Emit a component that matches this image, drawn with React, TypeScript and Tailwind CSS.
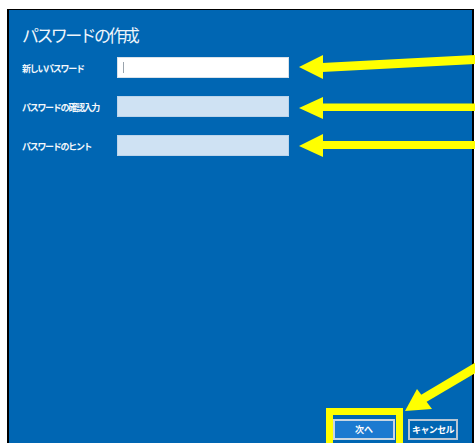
import React from 'react';

const jp = { fontFamily: '"Noto Sans CJK JP", "Noto Sans", sans-serif' };

type FieldProps = { label: string; active?: boolean };

function Field({ label, active }: FieldProps) {
  return (
    <div className="flex items-center h-[21px]">
      <div className="w-[95px] text-[9px] font-semibold text-[#f4f8fc] tracking-[-1.3px] leading-none pt-[2px]">{label}</div>
      <div
        className={`relative w-[172px] h-[21px] border ${
          active ? 'bg-white border-[#d9e2ea]' : 'bg-[#cfe2f3] border-[#bcd4ea]'
        }`}
      >
        {active && <div className="absolute left-[5px] top-[4px] w-px h-[11px] bg-[#9aa4ad]" />}
      </div>
    </div>
  );
}

export default function App() {
  return (
    <div className="relative w-[475px] h-[443px] bg-white overflow-hidden" style={jp}>
      <div className="ml-[7px] mt-[9px] w-[467px] h-[440px] bg-[#0066b3] border-l-2 border-t border-r-2 border-black flex flex-col">
        <h1 className="pl-[13px] pt-[13px] text-[17px] leading-[24px] font-normal text-[#eef5fb] tracking-[-2.6px]">
          パスワードの作成
        </h1>

        <div className="pl-[13px] mt-[10px] flex flex-col gap-[18px]">
          <Field label="新しいパスワード" active />
          <Field label="パスワードの確認入力" />
          <Field label="パスワードのヒント" />
        </div>

        <div className="flex-1" />

        <div className="flex justify-end gap-[13px] pr-[14px] pb-[9px]">
          <button className="w-[62px] h-[21px] bg-[#1c7ad0] border-2 border-[#c9d6e2] text-white text-[9px] font-bold leading-none">
            次へ
          </button>
          <button className="w-[50px] h-[21px] bg-[#0066b3] border-2 border-[#b7c6d4] text-white text-[9px] font-bold leading-none tracking-[-0.6px]">
            キャンセル
          </button>
        </div>
      </div>

      {/* annotation overlay */}
      <svg className="absolute inset-0 pointer-events-none" width="475" height="443" viewBox="0 0 475 443">
        <g fill="#ffff00">
          <polygon points="299,67 323,55 323,79" />
          <polygon points="322,63 476,55 476,64 322,72" />
          <polygon points="299,108 323,97 323,119" />
          <rect x="322" y="103.5" width="154" height="7.5" />
          <polygon points="299,146 323,134 323,157" />
          <rect x="322" y="141" width="154" height="8" />
          <polygon points="405,411 417,389 432,409" />
        </g>
        <line x1="421" y1="400" x2="480" y2="365" stroke="#ffff00" strokeWidth="9" />
        <rect x="329.5" y="411.5" width="70" height="40" fill="none" stroke="#ffff00" strokeWidth="7" />
      </svg>
    </div>
  );
}
